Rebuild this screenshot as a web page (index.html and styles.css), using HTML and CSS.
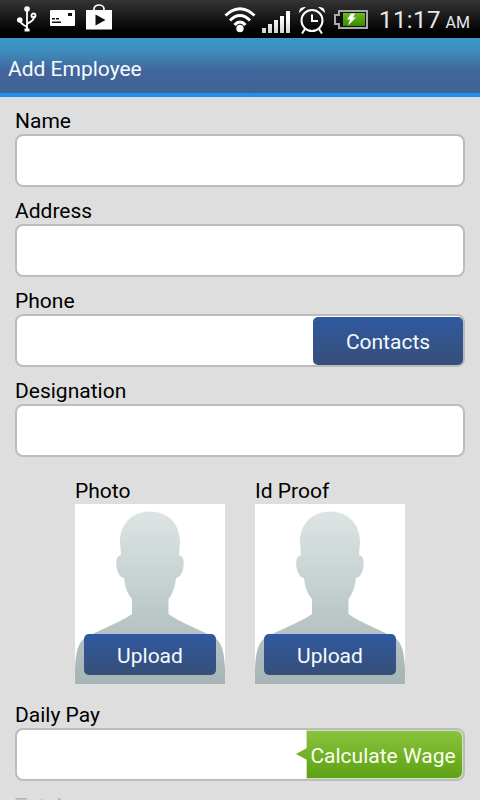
FILE: index.html
```html
<!DOCTYPE html>
<html lang="en">
<head>
    <meta charset="UTF-8">
    <meta name="viewport" content="width=device-width, initial-scale=1.0">
    <title>Add Employee</title>
    <link rel="stylesheet" href="styles.css">
</head>
<body>
    <div class="status-bar">
        <div class="status-left">
            <svg class="usb" width="20" height="26" viewBox="0 0 20 26">
                <g fill="none" stroke="#fff" stroke-width="1.8">
                    <path d="M10 3v20M3 14c0 4 3 4 7 7M17 10c0 5-3 5-7 8"/>
                    <circle cx="16.500" cy="9.500" r="2"/>
                </g>
                <g fill="#fff">
                    <circle cx="10" cy="3" r="2.800"/>
                    <circle cx="2.800" cy="14" r="2.800"/>
                    <path d="M7.500 22.500h5V25.500h-5z"/>
                </g>
            </svg>
            <svg class="card" width="25" height="16" viewBox="0 0 25 16">
                <rect width="25" height="16" rx="1" fill="#fff"/>
                <path d="M18 3h4v3h-4zM2 8h3v1.500H2zM6 8h3v1.500H6zM2 11.500h9V13H2z" fill="#111"/>
            </svg>
            <svg class="store" width="26" height="26" viewBox="0 0 26 26">
                <path d="M8 7V5a5 4 0 0 1 10 0v2" fill="none" stroke="#fff" stroke-width="1.700"/>
                <path d="M0 6h26v19.500H0z" fill="#fff"/>
                <path d="M9.500 10.500v11l10-5.500z" fill="#111"/>
            </svg>
        </div>
        <div class="status-right">
            <svg class="wifi" width="32" height="26" viewBox="0 0 32 26">
                <g fill="none" stroke="#fff" stroke-width="3">
                    <path d="M1.500 8.500Q16-5 30.500 8.500"/>
                    <path d="M6 13.500Q16 3.500 26 13.500"/>
                    <path d="M10.500 18Q16 12 21.500 18"/>
                </g>
                <circle cx="16" cy="21.500" r="3.700" fill="#fff"/>
            </svg>
            <svg class="signal" width="28" height="22" viewBox="0 0 28 22">
                <defs>
                    <linearGradient id="bars" x1="0" y1="0" x2="0" y2="22" gradientUnits="userSpaceOnUse">
                        <stop offset="0.300" stop-color="#fff"/>
                        <stop offset="1" stop-color="#d0d0d0"/>
                    </linearGradient>
                </defs>
                <path d="M0 17h4v5H0zM6 13h4v9H6zM12 9h4v13h-4zM18 5h4v17h-4zM24 0h4v22h-4z" fill="url(#bars)"/>
            </svg>
            <svg class="alarm" width="26" height="28" viewBox="0 0 26 28">
                <g fill="none" stroke="#fff" stroke-width="2">
                    <circle cx="13" cy="14.500" r="10.500"/>
                    <path d="M13 8.500V15h6M6 23l-3 4.500M20 23l3 4.500"/>
                </g>
                <path d="M0 7Q0 0 7 1zM26 7q0-7-7-6z" fill="#fff"/>
            </svg>
            <svg class="battery" width="34" height="20" viewBox="0 0 34 20">
                <defs>
                    <linearGradient id="charge" x1="0" y1="0" x2="0" y2="1">
                        <stop offset="0" stop-color="#6cba1c"/>
                        <stop offset="1" stop-color="#368c00"/>
                    </linearGradient>
                </defs>
                <path d="M5 1h28v17H5v-4H1V5h4z" fill="#111" stroke="#aaa" stroke-width="2"/>
                <path d="M9 3h22v13H9z" fill="url(#charge)"/>
                <path d="M17 3.500h4l-2 4h3l-8 8 2-6h-3z" fill="#fff"/>
            </svg>
            <div class="clock">11:17 <span class="ampm">AM</span></div>
        </div>
    </div>

    <div class="title-bar">Add Employee</div>

    <form class="employee-form">
        <label class="label" for="name">Name</label>
        <div class="field"><input type="text" id="name"></div>

        <label class="label" for="address">Address</label>
        <div class="field"><input type="text" id="address"></div>

        <label class="label" for="phone">Phone</label>
        <div class="field">
            <input type="text" id="phone">
            <button type="button" class="btn contacts">Contacts</button>
        </div>

        <label class="label" for="designation">Designation</label>
        <div class="field"><input type="text" id="designation"></div>

        <!-- Shared by both picture boxes -->
        <svg width="0" height="0" class="defs">
            <defs>
                <linearGradient id="skin" x1="0" y1="0" x2="0" y2="1">
                    <stop offset="0" stop-color="#dde5e4"/>
                    <stop offset="1" stop-color="#a5b4b5"/>
                </linearGradient>
                <symbol id="person" viewBox="0 0 150 180">
                    <path fill="url(#skin)" d="M75 7.500C57 7.500 45 20 45 38L46 51C40 52 41 61 42 65C43 70 46 74 49 74C50 83 52 89 57 95V110C46 118 24 126 10 134C2 139 1 151 0 164V180H150V164C149 151 148 139 140 134C126 126 104 118 93.500 110V95C98 89 100 83 101 74C104 74 107 70 108 65C109 61 110 52 104 51L105 38C105 20 93 7.500 75 7.500Z"/>
                </symbol>
            </defs>
        </svg>
        <div class="pictures">
            <div class="picture">
                <div class="label">Photo</div>
                <div class="picture-box">
                    <svg class="person" width="150" height="180"><use href="#person"/></svg>
                    <button type="button" class="btn upload">Upload</button>
                </div>
            </div>
            <div class="picture">
                <div class="label">Id Proof</div>
                <div class="picture-box">
                    <svg class="person" width="150" height="180"><use href="#person"/></svg>
                    <button type="button" class="btn upload">Upload</button>
                </div>
            </div>
        </div>

        <label class="label" for="pay">Daily Pay</label>
        <div class="field">
            <input type="text" id="pay">
            <button type="button" class="btn wage">Calculate Wage</button>
        </div>

        <div class="label next">Total</div>
    </form>
</body>
</html>
```

FILE: styles.css
```css
body {
    font-family: Roboto, sans-serif;
    margin: 0;
    height: 800px;
    background: #dedede;
    color: #000;
    font-size: 21px;
    overflow: hidden;
}

svg {
    display: block;
    flex: none;
}

.status-bar {
    display: flex;
    justify-content: space-between;
    height: 38px;
    background: linear-gradient(#353535, #000 85%);
    color: #e8e8e8;
}

.status-left, .status-right {
    display: flex;
    align-items: flex-start;
}

.usb {
    margin: 6px 0 0 17px;
}

.card {
    margin: 10px 0 0 13px;
}

.store {
    margin: 4px 0 0 11px;
}

.wifi {
    margin-top: 7px;
}

.signal {
    margin: 11px 0 0 6px;
}

.alarm {
    margin: 6px 0 0 9px;
}

.battery {
    margin: 10px 0 0 9px;
}

.clock {
    width: 91px;
    margin-left: 11px;
    padding-right: 10px;
    line-height: 40px;
    font-size: 24px;
    letter-spacing: 0.4px;
    white-space: nowrap;
    display: flex;
    justify-content: space-between;
}

.ampm {
    font-size: 16px;
    letter-spacing: 0;
    padding-top: 3px;
}

.title-bar {
    box-sizing: border-box;
    height: 59px;
    padding-left: 8px;
    line-height: 63px;
    color: #f4fbff;
    background: linear-gradient(#3c96cb, #3f8cbd 25%, #41649a 60%, #426494);
    border-bottom: 4px solid #1b91ea;
}

.employee-form {
    padding: 10px 15px 0;
}

.label {
    display: block;
    height: 27px;
    line-height: 29px;
}

.field {
    display: flex;
    box-sizing: border-box;
    height: 53px;
    margin-bottom: 10px;
    background: #fff;
    border: 2px solid #bcbcbc;
    border-radius: 8px;
}

.field input {
    flex: 1;
    min-width: 0;
    border: none;
    background: none;
    padding: 0 10px;
    font: inherit;
    outline: none;
}

.btn {
    flex: none;
    border: none;
    padding: 2px 0 0;
    font: inherit;
    color: #f4fbff;
    background: linear-gradient(#3059a1, #364f77);
    border-radius: 5px;
}

.contacts {
    width: 150px;
    height: 48px;
    margin-top: 1px;
}

.defs {
    position: absolute;
}

.pictures {
    display: flex;
    gap: 30px;
    padding: 10px 60px 17px;
}

.picture {
    width: 150px;
}

.picture-box {
    position: relative;
    height: 180px;
    background: #fff;
}

.upload {
    position: absolute;
    left: 9px;
    bottom: 9px;
    width: 132px;
    height: 41px;
}

.wage {
    position: relative;
    width: 157px;
    height: 49px;
    padding-right: 3px;
    color: #f8ffec;
    background: linear-gradient(#8ac43d, #5da014);
    border-radius: 0 7px 7px 0;
    box-shadow: inset 0 0 0 1px #cde5b0;
}

/* pointer towards the input */
.wage::before {
    content: "";
    position: absolute;
    left: -10px;
    top: 18px;
    border: 6px solid transparent;
    border-left: none;
    border-right: 11px solid #75b02c;
}

.next {
    line-height: 31px;
    color: #b4b4b4;
}
```
